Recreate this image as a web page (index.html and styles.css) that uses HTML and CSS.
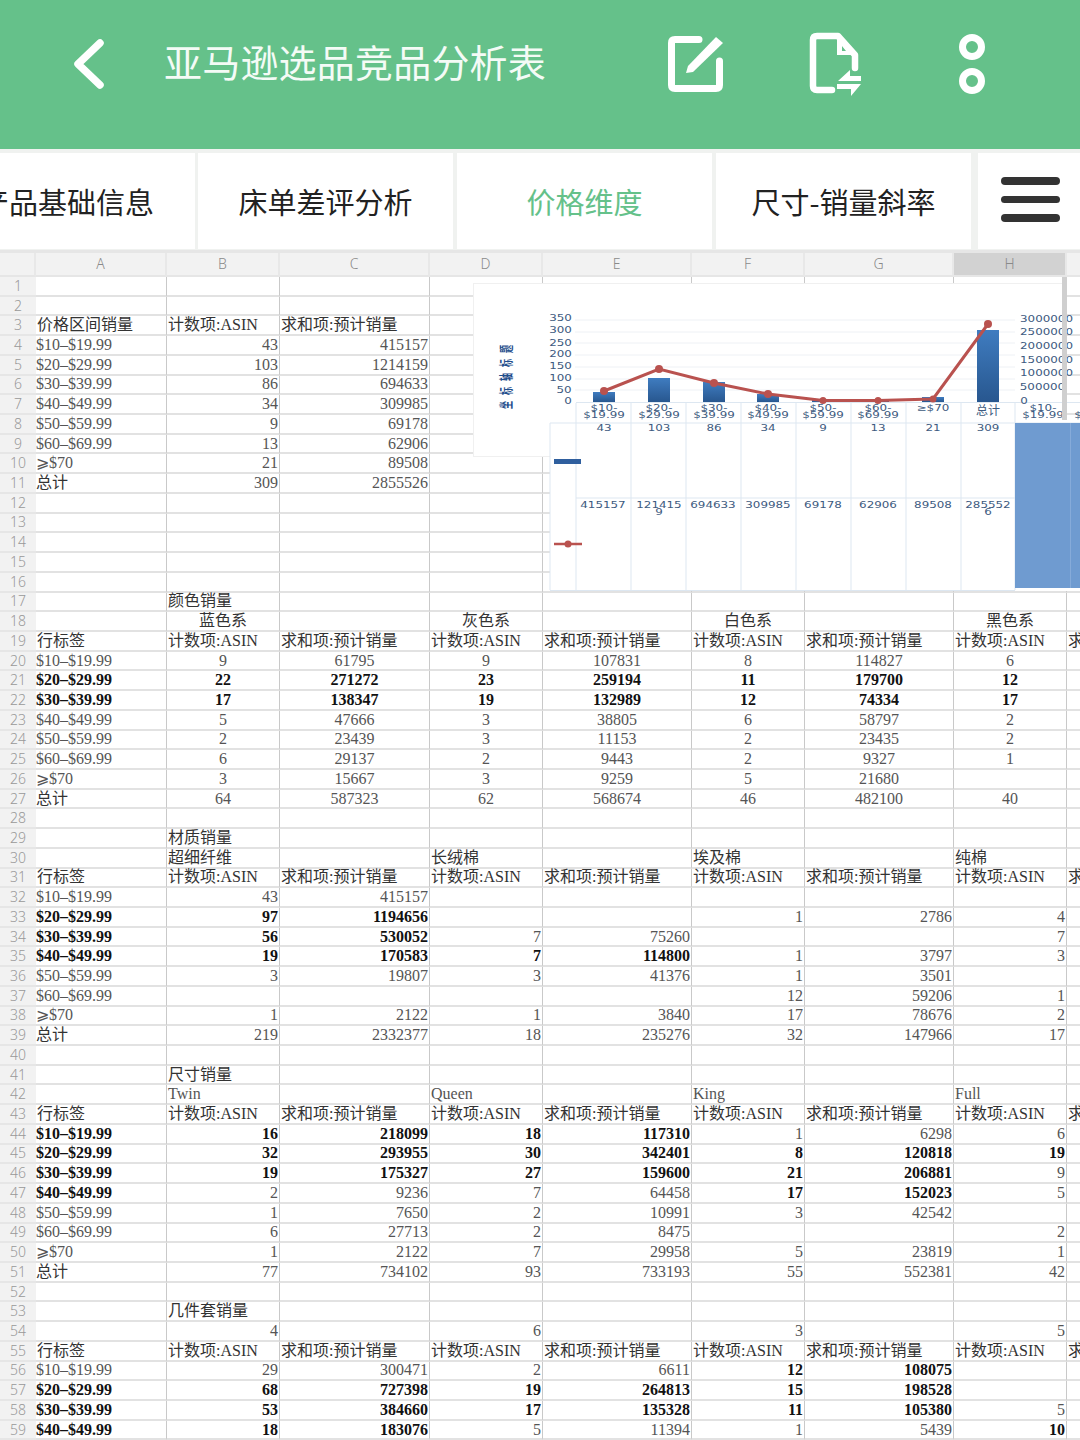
FILE: index.html
```html
<!DOCTYPE html>
<html lang="zh-CN">

<head>
    <meta charset="UTF-8">
    <meta name="viewport" content="width=device-width, initial-scale=1.0">
    <title>亚马逊选品竞品分析表</title>
    <link rel="stylesheet" href="styles.css">
</head>

<body>
    <header class="topbar">
        <svg class="back" width="34" height="50" viewBox="0 0 34 50">
            <path d="M28 4 L6 25 L28 46" fill="none" stroke="#fff" stroke-width="7.5" stroke-linecap="round" stroke-linejoin="round" />
        </svg>
        <h1 class="title">亚马逊选品竞品分析表</h1>
        <svg class="edit" width="56" height="56" viewBox="0 0 56 56">
            <path d="M31 3.5 H7 Q3.5 3.5 3.5 7 V49 Q3.5 52.500 7 52.500 H48 Q51.500 52.500 51.500 49 V25" fill="none" stroke="#fff" stroke-width="7" stroke-linecap="round" />
            <path d="M48 1 L55 7 L25 36 L18 37 L20 30 Z" fill="#fff" />
        </svg>
        <svg class="file" width="54" height="64" viewBox="0 0 54 64">
            <path d="M23 58 H8 Q4 58 4 54 V8 Q4 4 8 4 H29 L46 23 V36" fill="none" stroke="#fff" stroke-width="6.500" stroke-linecap="round" stroke-linejoin="round" />
            <path d="M28 5 V23 H46 Z M33 16 V19 H37 L33 14 Z" fill="#fff" fill-rule="evenodd" />
            <path d="M29 49 L41 38 V44 H52 V49 Z M28 52 H52 L42 64 V57 H28 Z" fill="#fff" />
        </svg>
        <svg class="dots" width="26" height="60" viewBox="0 0 26 60">
            <circle cx="13" cy="13" r="9.500" fill="none" stroke="#fff" stroke-width="7" />
            <circle cx="13" cy="47" r="9.500" fill="none" stroke="#fff" stroke-width="7" />
        </svg>
    </header>

    <nav class="tabs">
        <a class="tab tab-first">产品基础信息</a>
        <a class="tab">床单差评分析</a>
        <a class="tab tab-active">价格维度</a>
        <a class="tab">尺寸-销量斜率</a>
        <a class="tab-menu"><span></span><span></span><span></span></a>
    </nav>

    <section class="sheet">
        <table class="grid">
            <colgroup>
                <col class="w-head"><col class="w-a"><col class="w-s"><col class="w-l"><col class="w-s"><col class="w-l2"><col class="w-s"><col class="w-l2"><col class="w-s"><col class="w-l">
            </colgroup>
            <thead>
                <tr><th></th><th>A</th><th>B</th><th>C</th><th>D</th><th>E</th><th>F</th><th>G</th><th class="sel">H</th><th></th></tr>
            </thead>
            <tbody>
                <tr><th>1</th><td></td><td></td><td></td><td></td><td></td><td></td><td></td><td></td><td></td></tr>
                <tr><th>2</th><td></td><td></td><td></td><td></td><td></td><td></td><td></td><td></td><td></td></tr>
                <tr><th>3</th><td class="t">价格区间销量</td><td class="t">计数项:ASIN</td><td class="t">求和项:预计销量</td><td></td><td></td><td></td><td></td><td></td><td></td></tr>
                <tr class="num"><th>4</th><td class="lab">$10–$19.99</td><td>43</td><td>415157</td><td></td><td></td><td></td><td></td><td></td><td></td></tr>
                <tr class="num"><th>5</th><td class="lab">$20–$29.99</td><td>103</td><td>1214159</td><td></td><td></td><td></td><td></td><td></td><td></td></tr>
                <tr class="num"><th>6</th><td class="lab">$30–$39.99</td><td>86</td><td>694633</td><td></td><td></td><td></td><td></td><td></td><td></td></tr>
                <tr class="num"><th>7</th><td class="lab">$40–$49.99</td><td>34</td><td>309985</td><td></td><td></td><td></td><td></td><td></td><td></td></tr>
                <tr class="num"><th>8</th><td class="lab">$50–$59.99</td><td>9</td><td>69178</td><td></td><td></td><td></td><td></td><td></td><td></td></tr>
                <tr class="num"><th>9</th><td class="lab">$60–$69.99</td><td>13</td><td>62906</td><td></td><td></td><td></td><td></td><td></td><td></td></tr>
                <tr class="num"><th>10</th><td class="lab">⩾$70</td><td>21</td><td>89508</td><td></td><td></td><td></td><td></td><td></td><td></td></tr>
                <tr class="num"><th>11</th><td class="lab t">总计</td><td>309</td><td>2855526</td><td></td><td></td><td></td><td></td><td></td><td></td></tr>
                <tr><th>12</th><td></td><td></td><td></td><td></td><td></td><td></td><td></td><td></td><td></td></tr>
                <tr><th>13</th><td></td><td></td><td></td><td></td><td></td><td></td><td></td><td></td><td></td></tr>
                <tr><th>14</th><td></td><td></td><td></td><td></td><td></td><td></td><td></td><td></td><td></td></tr>
                <tr><th>15</th><td></td><td></td><td></td><td></td><td></td><td></td><td></td><td></td><td></td></tr>
                <tr><th>16</th><td></td><td></td><td></td><td></td><td></td><td></td><td></td><td></td><td></td></tr>
                <tr><th>17</th><td></td><td class="t">颜色销量</td><td></td><td></td><td></td><td></td><td></td><td></td><td></td></tr>
                <tr class="mid"><th>18</th><td></td><td class="t">蓝色系</td><td></td><td class="t">灰色系</td><td></td><td class="t">白色系</td><td></td><td class="t">黑色系</td><td></td></tr>
                <tr><th>19</th><td class="t">行标签</td><td class="t">计数项:ASIN</td><td class="t">求和项:预计销量</td><td class="t">计数项:ASIN</td><td class="t">求和项:预计销量</td><td class="t">计数项:ASIN</td><td class="t">求和项:预计销量</td><td class="t">计数项:ASIN</td><td class="t">求和项:预计销量</td></tr>
                <tr class="mid"><th>20</th><td class="lab">$10–$19.99</td><td>9</td><td>61795</td><td>9</td><td>107831</td><td>8</td><td>114827</td><td>6</td><td></td></tr>
                <tr class="mid bold"><th>21</th><td class="lab">$20–$29.99</td><td>22</td><td>271272</td><td>23</td><td>259194</td><td>11</td><td>179700</td><td>12</td><td></td></tr>
                <tr class="mid bold"><th>22</th><td class="lab">$30–$39.99</td><td>17</td><td>138347</td><td>19</td><td>132989</td><td>12</td><td>74334</td><td>17</td><td></td></tr>
                <tr class="mid"><th>23</th><td class="lab">$40–$49.99</td><td>5</td><td>47666</td><td>3</td><td>38805</td><td>6</td><td>58797</td><td>2</td><td></td></tr>
                <tr class="mid"><th>24</th><td class="lab">$50–$59.99</td><td>2</td><td>23439</td><td>3</td><td>11153</td><td>2</td><td>23435</td><td>2</td><td></td></tr>
                <tr class="mid"><th>25</th><td class="lab">$60–$69.99</td><td>6</td><td>29137</td><td>2</td><td>9443</td><td>2</td><td>9327</td><td>1</td><td></td></tr>
                <tr class="mid"><th>26</th><td class="lab">⩾$70</td><td>3</td><td>15667</td><td>3</td><td>9259</td><td>5</td><td>21680</td><td></td><td></td></tr>
                <tr class="mid"><th>27</th><td class="lab t">总计</td><td>64</td><td>587323</td><td>62</td><td>568674</td><td>46</td><td>482100</td><td>40</td><td></td></tr>
                <tr><th>28</th><td></td><td></td><td></td><td></td><td></td><td></td><td></td><td></td><td></td></tr>
                <tr><th>29</th><td></td><td class="t">材质销量</td><td></td><td></td><td></td><td></td><td></td><td></td><td></td></tr>
                <tr><th>30</th><td></td><td class="t">超细纤维</td><td></td><td class="t">长绒棉</td><td></td><td class="t">埃及棉</td><td></td><td class="t">纯棉</td><td></td></tr>
                <tr><th>31</th><td class="t">行标签</td><td class="t">计数项:ASIN</td><td class="t">求和项:预计销量</td><td class="t">计数项:ASIN</td><td class="t">求和项:预计销量</td><td class="t">计数项:ASIN</td><td class="t">求和项:预计销量</td><td class="t">计数项:ASIN</td><td class="t">求和项:预计销量</td></tr>
                <tr class="num"><th>32</th><td class="lab">$10–$19.99</td><td>43</td><td>415157</td><td></td><td></td><td></td><td></td><td></td><td></td></tr>
                <tr class="num"><th>33</th><td class="lab b">$20–$29.99</td><td class="b">97</td><td class="b">1194656</td><td></td><td></td><td>1</td><td>2786</td><td>4</td><td></td></tr>
                <tr class="num"><th>34</th><td class="lab b">$30–$39.99</td><td class="b">56</td><td class="b">530052</td><td>7</td><td>75260</td><td></td><td></td><td>7</td><td></td></tr>
                <tr class="num"><th>35</th><td class="lab b">$40–$49.99</td><td class="b">19</td><td class="b">170583</td><td class="b">7</td><td class="b">114800</td><td>1</td><td>3797</td><td>3</td><td></td></tr>
                <tr class="num"><th>36</th><td class="lab">$50–$59.99</td><td>3</td><td>19807</td><td>3</td><td>41376</td><td>1</td><td>3501</td><td></td><td></td></tr>
                <tr class="num"><th>37</th><td class="lab">$60–$69.99</td><td></td><td></td><td></td><td></td><td>12</td><td>59206</td><td>1</td><td></td></tr>
                <tr class="num"><th>38</th><td class="lab">⩾$70</td><td>1</td><td>2122</td><td>1</td><td>3840</td><td>17</td><td>78676</td><td>2</td><td></td></tr>
                <tr class="num"><th>39</th><td class="lab t">总计</td><td>219</td><td>2332377</td><td>18</td><td>235276</td><td>32</td><td>147966</td><td>17</td><td></td></tr>
                <tr><th>40</th><td></td><td></td><td></td><td></td><td></td><td></td><td></td><td></td><td></td></tr>
                <tr><th>41</th><td></td><td class="t">尺寸销量</td><td></td><td></td><td></td><td></td><td></td><td></td><td></td></tr>
                <tr><th>42</th><td></td><td>Twin</td><td></td><td>Queen</td><td></td><td>King</td><td></td><td>Full</td><td></td></tr>
                <tr><th>43</th><td class="t">行标签</td><td class="t">计数项:ASIN</td><td class="t">求和项:预计销量</td><td class="t">计数项:ASIN</td><td class="t">求和项:预计销量</td><td class="t">计数项:ASIN</td><td class="t">求和项:预计销量</td><td class="t">计数项:ASIN</td><td class="t">求和项:预计销量</td></tr>
                <tr class="num"><th>44</th><td class="lab b">$10–$19.99</td><td class="b">16</td><td class="b">218099</td><td class="b">18</td><td class="b">117310</td><td>1</td><td>6298</td><td>6</td><td></td></tr>
                <tr class="num bold"><th>45</th><td class="lab">$20–$29.99</td><td>32</td><td>293955</td><td>30</td><td>342401</td><td>8</td><td>120818</td><td>19</td><td></td></tr>
                <tr class="num"><th>46</th><td class="lab b">$30–$39.99</td><td class="b">19</td><td class="b">175327</td><td class="b">27</td><td class="b">159600</td><td class="b">21</td><td class="b">206881</td><td>9</td><td></td></tr>
                <tr class="num"><th>47</th><td class="lab b">$40–$49.99</td><td>2</td><td>9236</td><td>7</td><td>64458</td><td class="b">17</td><td class="b">152023</td><td>5</td><td></td></tr>
                <tr class="num"><th>48</th><td class="lab">$50–$59.99</td><td>1</td><td>7650</td><td>2</td><td>10991</td><td>3</td><td>42542</td><td></td><td></td></tr>
                <tr class="num"><th>49</th><td class="lab">$60–$69.99</td><td>6</td><td>27713</td><td>2</td><td>8475</td><td></td><td></td><td>2</td><td></td></tr>
                <tr class="num"><th>50</th><td class="lab">⩾$70</td><td>1</td><td>2122</td><td>7</td><td>29958</td><td>5</td><td>23819</td><td>1</td><td></td></tr>
                <tr class="num"><th>51</th><td class="lab t">总计</td><td>77</td><td>734102</td><td>93</td><td>733193</td><td>55</td><td>552381</td><td>42</td><td></td></tr>
                <tr><th>52</th><td></td><td></td><td></td><td></td><td></td><td></td><td></td><td></td><td></td></tr>
                <tr><th>53</th><td></td><td class="t">几件套销量</td><td></td><td></td><td></td><td></td><td></td><td></td><td></td></tr>
                <tr class="num"><th>54</th><td></td><td>4</td><td></td><td>6</td><td></td><td>3</td><td></td><td>5</td><td></td></tr>
                <tr><th>55</th><td class="t">行标签</td><td class="t">计数项:ASIN</td><td class="t">求和项:预计销量</td><td class="t">计数项:ASIN</td><td class="t">求和项:预计销量</td><td class="t">计数项:ASIN</td><td class="t">求和项:预计销量</td><td class="t">计数项:ASIN</td><td class="t">求和项:预计销量</td></tr>
                <tr class="num"><th>56</th><td class="lab">$10–$19.99</td><td>29</td><td>300471</td><td>2</td><td>6611</td><td class="b">12</td><td class="b">108075</td><td></td><td></td></tr>
                <tr class="num"><th>57</th><td class="lab b">$20–$29.99</td><td class="b">68</td><td class="b">727398</td><td class="b">19</td><td class="b">264813</td><td class="b">15</td><td class="b">198528</td><td></td><td></td></tr>
                <tr class="num"><th>58</th><td class="lab b">$30–$39.99</td><td class="b">53</td><td class="b">384660</td><td class="b">17</td><td class="b">135328</td><td class="b">11</td><td class="b">105380</td><td>5</td><td></td></tr>
                <tr class="num"><th>59</th><td class="lab b">$40–$49.99</td><td class="b">18</td><td class="b">183076</td><td>5</td><td>11394</td><td>1</td><td>5439</td><td class="b">10</td><td></td></tr>
            </tbody>
        </table>

        <!-- floating chart object, coordinates are page pixels through the viewBox -->
        <svg class="chart" width="607" height="314" viewBox="473 277 607 314">
            <rect class="panel panel-edge" x="473.500" y="283.500" width="589" height="173" />
            <rect class="panel" x="550" y="420" width="530" height="171" />

            <g class="gridline">
                <path d="M575 320 H1015 M575 332 H1015 M575 343 H1015 M575 355 H1015 M575 367 H1015 M575 379 H1015 M575 390 H1015" />
            </g>
            <g class="tableline">
                <path d="M550 423 V590 M576 403 V590 M631 403 V590 M686 403 V590 M741 403 V590 M796 403 V590 M851 403 V590 M906 403 V590 M961 403 V590 M1015 403 V590" />
                <path d="M576 402.500 H1080 M550 423 H1080 M576 498 H1015 M550 590.500 H1015" />
            </g>

            <defs>
                <linearGradient id="bar" x1="0" y1="0" x2="0" y2="1">
                    <stop offset="0" stop-color="#3f7cc0" />
                    <stop offset="1" stop-color="#28578f" />
                </linearGradient>
            </defs>
            <g fill="url(#bar)">
                <rect x="593" y="392" width="22" height="10" />
                <rect x="648" y="378" width="22" height="24" />
                <rect x="703" y="382" width="22" height="20" />
                <rect x="757" y="394" width="22" height="8" />
                <rect x="812" y="400" width="22" height="2" />
                <rect x="867" y="399" width="22" height="3" />
                <rect x="922" y="397" width="22" height="5" />
                <rect x="977" y="330" width="22" height="72" />
            </g>
            <polyline points="604,391 659,369 714,383 768,394 823,400.500 878,400.500 933,399 988,324" fill="none" stroke="#b9524f" stroke-width="3" />
            <g fill="#b9524f">
                <circle cx="604" cy="391" r="4" />
                <circle cx="659" cy="369" r="4" />
                <circle cx="714" cy="383" r="4" />
                <circle cx="768" cy="394" r="4" />
                <circle cx="823" cy="400.500" r="3.500" />
                <circle cx="878" cy="400.500" r="3.500" />
                <circle cx="933" cy="399" r="3.500" />
                <circle cx="988" cy="324" r="4" />
            </g>

            <text class="axis-title" transform="translate(511 409) rotate(-90) scale(1 1.7)">坐标轴标题</text>

            <g class="axis" text-anchor="middle">
                <text x="560.500" y="321">350</text>
                <text x="560.500" y="333">300</text>
                <text x="560.500" y="346">250</text>
                <text x="560.500" y="357">200</text>
                <text x="560.500" y="369">150</text>
                <text x="560.500" y="381">100</text>
                <text x="564" y="393">50</text>
                <text x="568" y="404">0</text>

                <text x="1046.500" y="322">3000000</text>
                <text x="1046.500" y="335">2500000</text>
                <text x="1046.500" y="349">2000000</text>
                <text x="1046.500" y="363">1500000</text>
                <text x="1046.500" y="376">1000000</text>
                <text x="1042.500" y="390">500000</text>
                <text x="1024" y="404">0</text>

                <text x="604" y="411">$10-</text><text x="604" y="418.500">$19.99</text>
                <text x="659" y="411">$20-</text><text x="659" y="418.500">$29.99</text>
                <text x="714" y="411">$30-</text><text x="714" y="418.500">$39.99</text>
                <text x="768" y="411">$40-</text><text x="768" y="418.500">$49.99</text>
                <text x="823" y="411">$50-</text><text x="823" y="418.500">$59.99</text>
                <text x="878" y="411">$60-</text><text x="878" y="418.500">$69.99</text>
                <text x="933" y="411">≥$70</text>
                <text class="axis-cn" x="988" y="415">总计</text>
                <text x="1043" y="411">$10-</text><text x="1043" y="418.500">$19.99</text>
                <text x="1078" y="418.500">$</text>

                <text x="604" y="431">43</text>
                <text x="659" y="431">103</text>
                <text x="714" y="431">86</text>
                <text x="768" y="431">34</text>
                <text x="823" y="431">9</text>
                <text x="878" y="431">13</text>
                <text x="933" y="431">21</text>
                <text x="988" y="431">309</text>

                <text x="603" y="508">415157</text>
                <text x="659" y="508">121415</text><text x="659" y="515.500">9</text>
                <text x="713" y="508">694633</text>
                <text x="768" y="508">309985</text>
                <text x="823" y="508">69178</text>
                <text x="878" y="508">62906</text>
                <text x="933" y="508">89508</text>
                <text x="988" y="508">285552</text><text x="988" y="515.500">6</text>
            </g>

            <rect x="1015" y="423" width="65" height="165" fill="#6f9bd0" />
            <path d="M1070.500 423 V588" stroke="#86abd9" />
            <rect x="554" y="459" width="27" height="5" fill="#2f5f9e" />
            <path d="M554 544 H582" stroke="#b9524f" stroke-width="2.500" />
            <circle cx="568" cy="544" r="3.500" fill="#b9524f" />
            <rect x="1062" y="277" width="5" height="143" fill="#cfcfcf" />
        </svg>
    </section>
</body>

</html>
```

FILE: styles.css
```css
* {
    box-sizing: border-box;
}

body {
    margin: 0;
    width: 1080px;
    height: 1440px;
    overflow: hidden;
    background-color: #fff;
    font-family: "Noto Sans CJK SC", sans-serif;
}

.topbar {
    display: flex;
    align-items: center;
    height: 149px;
    padding: 0 0 21px 72px;
    background-color: #65c18a;
}

.title {
    flex: none;
    width: 504px;
    margin: -6px 0 0 58px;
    color: #f4fbf6;
    font-size: 38px;
    font-weight: 400;
    letter-spacing: .2px;
    line-height: 50px;
}

.file {
    margin-left: 85px;
}

.dots {
    margin-left: 96px;
}

.tabs {
    display: flex;
    height: 104px;
    padding: 4px 0 1px;
    background-color: #f0f2f0;
    border-bottom: 3px solid #e6e6e6;
}

.tab {
    display: flex;
    flex: none;
    align-items: center;
    justify-content: center;
    width: 255px;
    margin-right: 4px;
    background-color: #fff;
    color: #222;
    font-size: 29px;
    font-weight: 400;
    white-space: nowrap;
}

.tab-first {
    width: 195px;
    margin-right: 3px;
    justify-content: flex-end;
    padding-right: 41px;
    overflow: hidden;
}

.tab-active {
    color: #65c18a;
}

.tab-menu {
    display: flex;
    flex: 1;
    flex-direction: column;
    gap: 11px;
    justify-content: center;
    margin-left: 3px;
    padding: 0 20px 3px 23px;
    background-color: #fff;
}

.tab-menu span {
    height: 7.500px;
    background-color: #333;
    border-radius: 4px;
}

.sheet {
    position: relative;
    height: 1187px;
    overflow: hidden;
}

.grid {
    width: 1217px;
    table-layout: fixed;
    border-collapse: separate;
    border-spacing: 0;
    font-family: "Liberation Serif", "Noto Sans CJK SC", serif;
    font-size: 16px;
    line-height: 16px;
    color: #555;
}

.w-head { width: 36px; }
.w-a { width: 131px; }
.w-s { width: 113px; }
.w-l { width: 150px; }
.w-l2 { width: 149px; }

.grid thead th {
    height: 24px;
    background-color: #f2f2f2;
    border-right: 2px solid #e8e8e8;
    border-bottom: 2px solid #e6e6e6;
    color: #8a8a8a;
    font-family: "Noto Sans", sans-serif;
    font-size: 14px;
    font-weight: 300;
}

.grid thead th.sel {
    background-color: #d2d2d2;
}

.grid tbody tr {
    height: 19.720px;
}

.grid tbody th {
    padding: 0;
    background-color: #f2f2f2;
    border-bottom: 2px solid #e6e6e6;
    color: #999;
    font-family: "Noto Sans", sans-serif;
    font-size: 14px;
    font-weight: 300;
    line-height: 14px;
}

.grid td {
    padding: 0 1px;
    border-right: 1px solid #c9c9c9;
    border-bottom: 2px solid #e2e2e2;
    white-space: nowrap;
}

.num td {
    text-align: right;
}

.mid td {
    text-align: center;
}

.grid td.lab {
    padding-left: 0;
    text-align: left;
}

.grid td.t {
    color: #333;
}

.grid td.b,
.bold td {
    color: #111;
    font-weight: bold;
}

.chart {
    position: absolute;
    left: 473px;
    top: 24px;
}

.panel {
    fill: #fff;
}

.panel-edge {
    stroke: #f0f0f0;
}

.gridline path {
    fill: none;
    stroke: #eef1f5;
}

.tableline path {
    fill: none;
    stroke: #dde7f1;
}

/* chart labels are stretched sideways in the sheet preview */
.axis text {
    fill: #3d5a80;
    font-family: "DejaVu Sans", sans-serif;
    font-size: 8.500px;
    transform-box: fill-box;
    transform-origin: center;
    transform: scaleX(1.4);
}

.axis .axis-cn {
    font-family: "Noto Sans CJK SC", sans-serif;
    font-size: 12px;
    transform: none;
}

.axis-title {
    fill: #1f4e8c;
    font-size: 8px;
    font-weight: bold;
    letter-spacing: 6px;
}
```
